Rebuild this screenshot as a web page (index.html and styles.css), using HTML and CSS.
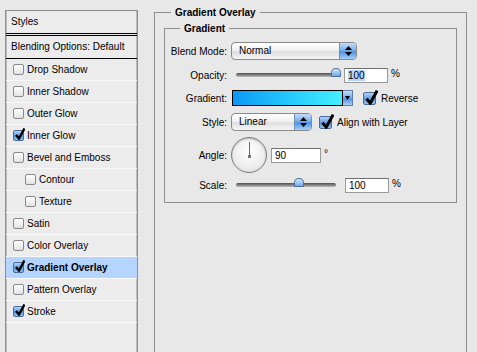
FILE: index.html
```html
<html>
  <head>
    <title>Layer Style</title>
    <link rel="stylesheet" href="styles.css">
  </head>
  <body>
    <div id="dialog">
      <aside id="styles">
        <div class="head">Styles</div>
        <div class="blending">Blending Options: Default</div>
        <ul>
          <li><span class="check"></span>Drop Shadow</li>
          <li><span class="check"></span>Inner Shadow</li>
          <li><span class="check"></span>Outer Glow</li>
          <li><span class="check on"></span>Inner Glow</li>
          <li><span class="check"></span>Bevel and Emboss</li>
          <li class="sub"><span class="check"></span>Contour</li>
          <li class="sub"><span class="check"></span>Texture</li>
          <li><span class="check"></span>Satin</li>
          <li><span class="check"></span>Color Overlay</li>
          <li class="active"><span class="check on"></span>Gradient Overlay</li>
          <li><span class="check"></span>Pattern Overlay</li>
          <li><span class="check on"></span>Stroke</li>
        </ul>
      </aside>

      <fieldset class="group outer">
        <legend>Gradient Overlay</legend>
        <fieldset class="group inner">
          <legend>Gradient</legend>

          <div class="row r-blend">
            <label>Blend Mode:</label>
            <div class="select wide"><span>Normal</span><i class="stepper"></i></div>
          </div>

          <div class="row r-opacity">
            <label>Opacity:</label>
            <div class="slider long"><b class="thumb" style="left: 95px"></b></div>
            <div class="field"><span class="sel">100</span></div>
            <span class="unit">%</span>
          </div>

          <div class="row r-gradient">
            <label>Gradient:</label>
            <div class="ramp"></div>
            <i class="drop"></i>
            <span class="check big on"></span>
            <span class="opt">Reverse</span>
          </div>

          <div class="row r-style">
            <label>Style:</label>
            <div class="select short"><span>Linear</span><i class="stepper"></i></div>
            <span class="check big on"></span>
            <span class="opt">Align with Layer</span>
          </div>

          <div class="row r-angle">
            <label>Angle:</label>
            <div class="dial"><i class="hand"></i></div>
            <div class="field angle">90</div>
            <span class="unit deg">°</span>
          </div>

          <div class="row r-scale">
            <label>Scale:</label>
            <div class="slider"><b class="thumb" style="left: 58px"></b></div>
            <div class="field">100</div>
            <span class="unit">%</span>
          </div>
        </fieldset>
      </fieldset>
    </div>
  </body>
</html>
```

FILE: styles.css
```css
* {
  box-sizing: border-box;
  margin: 0;
  padding: 0;
}
body {
  background: #e8e8e8;
  font-family: "Liberation Sans", Arial, sans-serif;
  font-size: 10px;
  color: #000;
  overflow: hidden;
}
#dialog {
  display: flex;
  align-items: flex-start;
  padding-left: 5px;
  height: 352px;
  overflow: hidden;
}

/* left list */
#styles {
  width: 133px;
  margin-top: 10px;
  height: 342px;
  background: #ececec;
  border: 1px solid #8e8e8e;
  border-bottom: none;
  box-shadow: inset 1px 0 0 #bdbdbd, inset -1px 0 0 #bdbdbd;
}
#styles .head {
  height: 25px;
  line-height: 22px;
  padding-left: 5px;
  border-bottom: 3px double #000;
}
#styles .blending {
  height: 23px;
  line-height: 22px;
  padding-left: 5px;
  border-bottom: 1px solid #000;
}
#styles ul {
  list-style: none;
}
#styles li {
  display: flex;
  align-items: center;
  height: 22px;
  padding-left: 7px;
  border-bottom: 1px solid #f9f9f9;
}
#styles li.sub {
  padding-left: 19px;
}
#styles li.active {
  background: #b5d4fe;
  font-weight: bold;
}

.check {
  display: inline-block;
  width: 11px;
  height: 11px;
  margin-right: 3px;
  border: 1px solid #8a8a8a;
  border-radius: 2px;
  background: linear-gradient(#ffffff, #e2e2e2);
  position: relative;
}
.check.on {
  border-color: #4a6a94;
  background: linear-gradient(#b4d4f8, #5b97dc 55%, #8cc0f2);
}
.check.on::after {
  content: "";
  position: absolute;
  left: 1px;
  top: -3px;
  width: 10px;
  height: 12px;
  background: no-repeat center / contain url("data:image/svg+xml;utf8,<svg xmlns='http://www.w3.org/2000/svg' viewBox='0 0 10 12'><path d='M1 7 L4 10.5 L9.5 0.5' fill='none' stroke='black' stroke-width='2.4'/></svg>");
}
.check.big {
  width: 13px;
  height: 13px;
}
.check.big.on::after {
  left: 1px;
  top: -3px;
  width: 13px;
  height: 15px;
}

/* right panel */
.group {
  border: 1px solid #8d8d8d;
}
.group legend {
  font-weight: bold;
  line-height: 13px;
  padding: 0 4px;
}
.outer {
  width: 313px;
  height: 346px;
  margin: 6px 0 0 16px;
  padding: 0 9px;
  border-bottom: none;
}
.outer > legend {
  margin-left: 7px;
}
.inner {
  margin-top: 3px;
  padding: 0 0 9px 0;
}
.inner > legend {
  margin-left: 15px;
}

.row {
  display: flex;
  align-items: center;
}
.row label {
  width: 62px;
  margin-right: 4px;
  text-align: right;
}
.r-blend { height: 18px; margin-top: 7px; }
.r-opacity { height: 16px; margin-top: 7px; }
.r-gradient { height: 16px; margin-top: 7px; }
.r-style { height: 18px; margin-top: 7px; }
.r-angle { height: 36px; margin-top: 6px; }
.r-scale { height: 16px; margin-top: 4px; }

.select {
  display: flex;
  height: 18px;
  border: 1px solid #8a8a8a;
  border-radius: 4px;
  background: linear-gradient(#ffffff, #f1f1f1 45%, #dedede 55%, #f6f6f6);
  overflow: hidden;
}
.select span {
  flex-grow: 1;
  padding-left: 7px;
  line-height: 16px;
}
.select.wide { width: 126px; }
.select.short { width: 81px; }
.stepper {
  width: 17px;
  border-left: 1px solid #6f8fb8;
  background:
    no-repeat center / 7px 10px url("data:image/svg+xml;utf8,<svg xmlns='http://www.w3.org/2000/svg' viewBox='0 0 7 10'><path d='M3.5 0 L7 4 H0Z M3.5 10 L7 6 H0Z' fill='black'/></svg>"),
    linear-gradient(#c3dcf7, #78b0ec 45%, #4f92e2 55%, #a6d0f8);
}

.slider {
  position: relative;
  width: 100px;
  height: 4px;
  margin-left: 5px;
  border-radius: 2px;
  background: linear-gradient(#4e4e4e, #8c8c8c 60%, #bdbdbd);
}
.slider.long {
  width: 104px;
}
.thumb {
  position: absolute;
  top: -5px;
  width: 10px;
  height: 9px;
  background: no-repeat center / contain url("data:image/svg+xml;utf8,<svg xmlns='http://www.w3.org/2000/svg' viewBox='0 0 10 9'><defs><linearGradient id='g' x1='0' y1='0' x2='0' y2='1'><stop offset='0' stop-color='%23d8ebfd'/><stop offset='1' stop-color='%236aa7e8'/></linearGradient></defs><path d='M0.5 8.5 V4.5 Q0.5 0.5 5 0.5 Q9.5 0.5 9.5 4.5 V8.5Z' fill='url(%23g)' stroke='%234d6f99'/></svg>");
}

.field {
  width: 44px;
  height: 15px;
  margin-left: 4px;
  padding-left: 3px;
  line-height: 13px;
  background: #fff;
  border: 1px solid #9a9a9a;
  border-top-color: #6e6e6e;
}
.r-scale .field {
  margin-left: 9px;
}
.field .sel {
  background: #b5d5fe;
}
.field.angle {
  width: 50px;
}
.unit {
  margin-left: 3px;
  align-self: flex-start;
  margin-top: 1px;
}
.unit.deg {
  margin-top: 11px;
}

.ramp {
  width: 111px;
  height: 16px;
  margin-left: 1px;
  border: 1px solid #000;
  background: linear-gradient(to right, #0c97f6, #20c4fb 45%, #45eeff);
}
.drop {
  width: 10px;
  height: 16px;
  border: 1px solid #5f7fa8;
  border-left: none;
  background:
    no-repeat center / 5px 4px url("data:image/svg+xml;utf8,<svg xmlns='http://www.w3.org/2000/svg' viewBox='0 0 5 4'><path d='M0 0 H5 L2.5 4Z' fill='black'/></svg>"),
    linear-gradient(#c3dcf7, #78b0ec 45%, #4f92e2 55%, #a6d0f8);
}
.r-gradient .check {
  margin-left: 10px;
}
.r-style .check {
  margin-left: 7px;
}
.opt {
  margin-left: 2px;
}

.dial {
  position: relative;
  width: 36px;
  height: 36px;
  border-radius: 50%;
  border: 1px solid #7d7d7d;
  background: radial-gradient(circle at 50% 40%, #ffffff, #ededed 60%, #d2d2d2);
  box-shadow: inset 0 1px 2px rgba(0, 0, 0, 0.25);
}
.hand {
  position: absolute;
  left: 17px;
  top: 4px;
  width: 1px;
  height: 14px;
  background: #666;
}
.hand::after {
  content: "";
  position: absolute;
  left: -1px;
  bottom: -2px;
  width: 3px;
  height: 3px;
  background: #777;
}
```
